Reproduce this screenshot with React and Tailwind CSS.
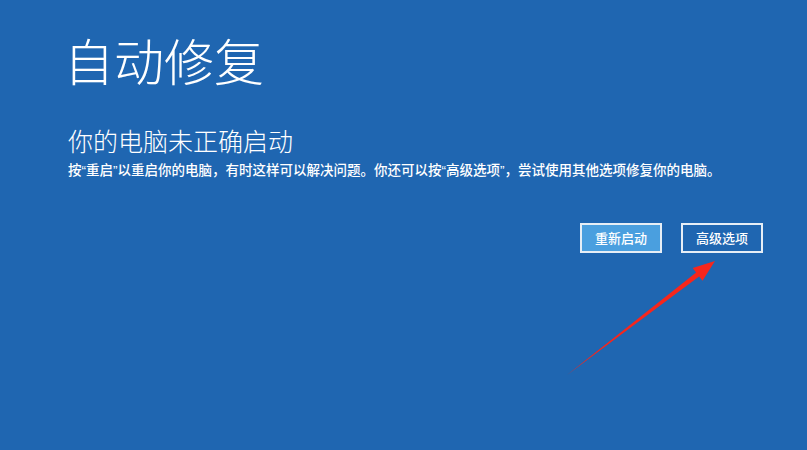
export default function App() {
  const cjk = { fontFamily: '"Noto Sans CJK SC", "Noto Sans", sans-serif' };
  // Curly quotes set in a Latin face so they stay narrow like the system UI font
  const q = (c) => <span style={{ fontFamily: '"Liberation Sans", sans-serif' }}>{c}</span>;
  return (
    <div className="relative w-[807px] h-[450px] overflow-hidden bg-[#1f66b1] text-white" style={cjk}>
      <div className="pl-[64px] pt-[27px] pr-[40px]">
        <h1 className="text-[50px] leading-[64px] font-light">自动修复</h1>
        <h2 className="mt-[33px] pl-[4px] text-[25px] leading-[32px] font-light">你的电脑未正确启动</h2>
        <p className="mt-[4px] pl-[4px] text-[13.5px] leading-[18px] font-medium whitespace-nowrap">
          按{q("“")}重启{q("”")}以重启你的电脑，有时这样可以解决问题。你还可以按{q("“")}高级选项{q("”")}，尝试使用其他选项修复你的电脑。
        </p>
        <div className="mt-[43px] flex justify-end gap-[19px] pr-[4px]">
          <button className="w-[82px] h-[30px] border-2 border-[#e6eef6] bg-[#4a9fdf] text-[13px] font-medium text-white">
            重新启动
          </button>
          <button className="w-[82px] h-[30px] border-2 border-[#e6eef6] bg-[#1f66b1] text-[13px] font-medium text-white">
            高级选项
          </button>
        </div>
      </div>
      {/* red pointer arrow */}
      <svg className="absolute left-0 top-0 pointer-events-none" width="807" height="450" viewBox="0 0 807 450">
        <polygon
          points="567,375 699.1,276.4 702.5,280.7 715,261 692.7,268.1 696.1,272.4"
          fill="#f7261c"
        />
      </svg>
    </div>
  );
}
